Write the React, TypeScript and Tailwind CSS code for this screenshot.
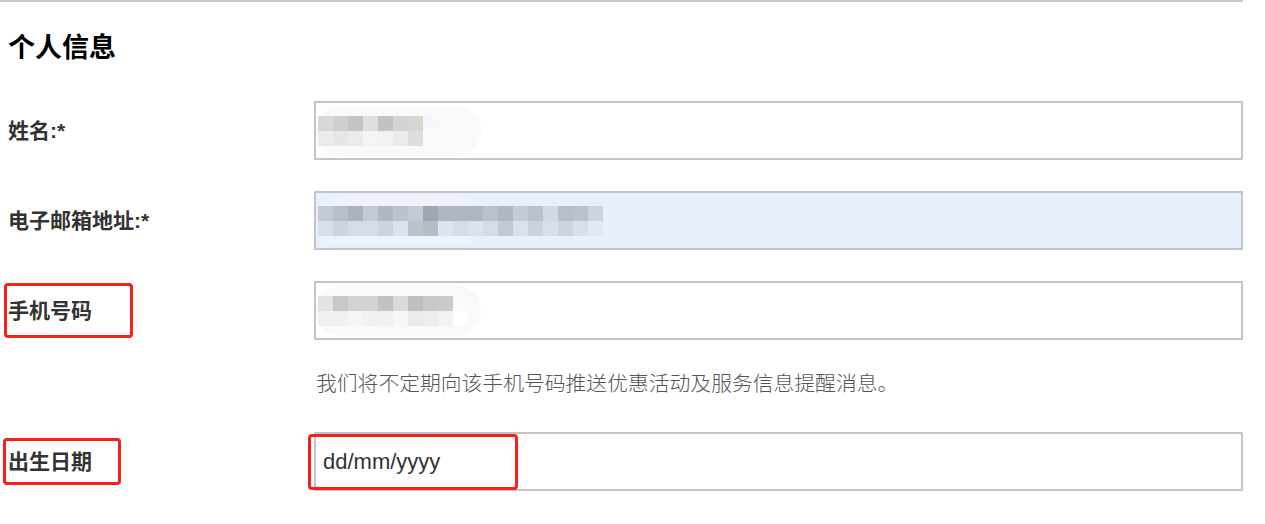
type Cell = string;

const nameCells: Cell[][] = [
  ["#d8d8d8", "#cfcfcf", "#c4c4c4", "#dde0e0", "#c2c2c2", "#d3d5d5", "#d8d5d5", "#f4f7fb"],
  ["#ebebeb", "#e6e6e6", "#ebebeb", "#f4f4f4", "#f2f2f2", "#ebebeb", "#dedcdc", "#f8f9fb"],
];

const emailCells: Cell[][] = [
  ["#c6cad3", "#b8bfcc", "#adb3bc", "#c3cad6", "#b2b7c1", "#bcc3cf", "#c4cad6", "#a0a7b2", "#b0b6c0", "#b0b6c0", "#b0b6c0", "#bac1ce", "#b2b8c3", "#c6ccd7", "#bac0cc", "#d3d9e4", "#b8bfcb", "#bcc2c9", "#cdd5e2"],
  ["#d7dfec", "#cdd4e0", "#d5dce8", "#d5dce8", "#cdd4e0", "#dbe2ee", "#bcc2cc", "#b6bcc6", "#dde4f0", "#d5dce8", "#dbe2ee", "#d5dce8", "#c3c9d4", "#dae1ed", "#cbd2de", "#d7dfec", "#cdd4e0", "#d7dfec", "#e1e8f4"],
];

const phoneCells: Cell[][] = [
  ["#e3e3e3", "#c7c7c9", "#d3d3d3", "#d5d3d1", "#c2c2c2", "#dadada", "#bebebe", "#c8c8c8", "#cacaca", "#fafafa"],
  ["#f0f0f0", "#f0f0f0", "#f5f5f5", "#f1f0ee", "#f1f1f1", "#f7f7f7", "#ebebeb", "#ededed", "#f3f3f3", "#ffffff"],
];

// pixelated (redacted) value inside a field
function Mosaic({ rows, blob }: { rows: Cell[][]; blob: string }) {
  return (
    <div className="relative ml-[1px]">
      <div className={`absolute -left-[2px] -top-[10px] h-[50px] w-[165px] rounded-[25px] ${blob}`} />
      <div className="relative flex flex-col">
        {rows.map((row, i) => (
          <div key={i} className="flex">
            {row.map((c, j) => (
              <div key={j} className="h-[15px] w-[15px]" style={{ backgroundColor: c }} />
            ))}
          </div>
        ))}
      </div>
    </div>
  );
}

function RedBox({ className }: { className: string }) {
  return <div className={`pointer-events-none absolute rounded-[4px] border-[3px] border-[#f8201a] ${className}`} />;
}

const field = "h-[59px] border-2 border-[#c4c4c4] flex items-center";
const label = "relative pl-2 text-[21px] font-bold leading-[28px] text-[#333]";

export default function App() {
  return (
    <div
      className="w-[1243px] bg-white pb-8"
      style={{ fontFamily: '"Liberation Sans", "Noto Sans CJK SC", sans-serif' }}
    >
      <div className="h-[2px] bg-[#c8c8c8]" />
      <h2 className="mt-[30px] pl-2 text-[27px] font-bold leading-[32px] text-black">个人信息</h2>

      <div className="mt-[37px] flex flex-col">
        <div className="grid grid-cols-[314px_1fr] items-center">
          <div className={label}>姓名:*</div>
          <div className={`${field} bg-white pl-[1px]`}>
            <Mosaic rows={nameCells} blob="bg-[#f9f9f9]" />
          </div>
        </div>

        <div className="mt-[31px] grid grid-cols-[314px_1fr] items-center">
          <div className={label}>电子邮箱地址:*</div>
          <div className={`${field} bg-[#e8f0fe] pl-[1px]`}>
            <Mosaic rows={emailCells} blob="bg-[#edf2fb]" />
          </div>
        </div>

        <div className="mt-[31px] grid grid-cols-[314px_1fr] items-center">
          <div className={label}>
            手机号码
            <RedBox className="left-[4px] -top-[14px] h-[55px] w-[129px]" />
          </div>
          <div className={`${field} bg-white pl-[1px]`}>
            <Mosaic rows={phoneCells} blob="bg-[#f9f9f9]" />
          </div>
        </div>

        <div className="mt-[30px] grid grid-cols-[314px_1fr]">
          <div />
          <p className="pl-[2px] text-[20.8px] font-light leading-[28px] text-[#555]">
            我们将不定期向该手机号码推送优惠活动及服务信息提醒消息。
          </p>
        </div>

        <div className="mt-[34px] grid grid-cols-[314px_1fr] items-center">
          <div className={label}>
            出生日期
            <RedBox className="left-[3px] -top-[10px] h-[47px] w-[118px]" />
          </div>
          <div className={`${field} relative bg-white pl-[7px] text-[22px] text-[#333]`}>
            dd/mm/yyyy
            <RedBox className="-left-[8px] top-0 h-[56px] w-[210px]" />
          </div>
        </div>
      </div>
    </div>
  );
}
